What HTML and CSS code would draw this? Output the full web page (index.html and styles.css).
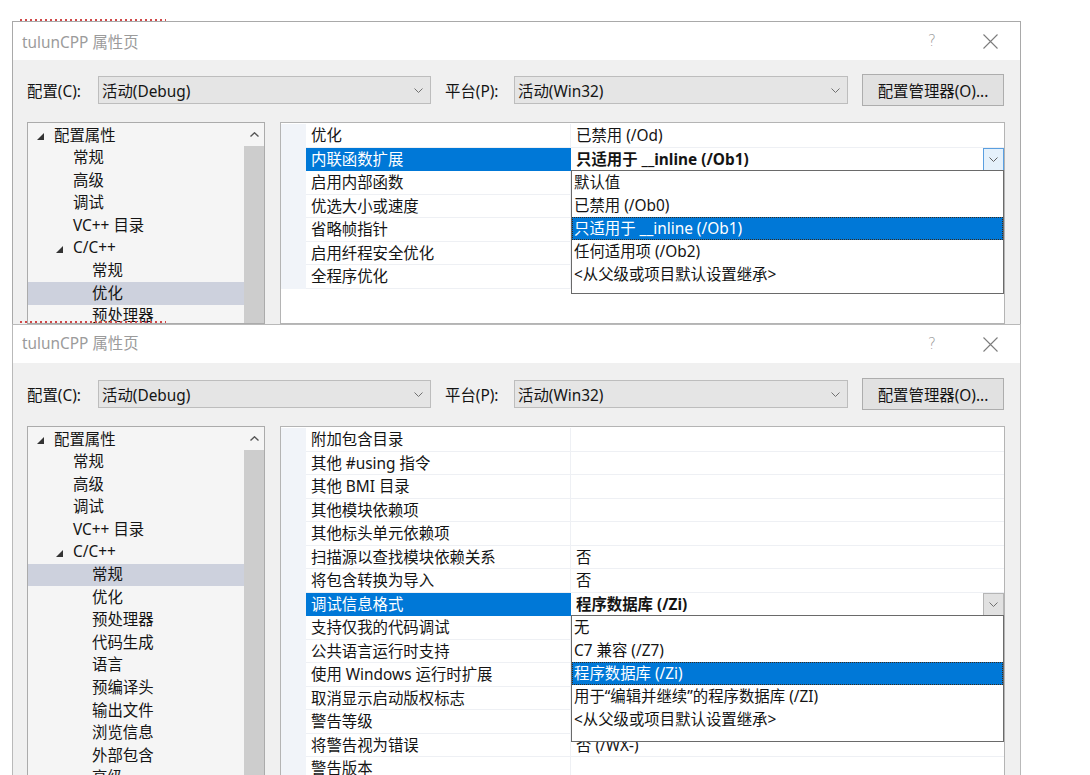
FILE: index.html
```html
<!DOCTYPE html>
<html lang="zh-CN">
<head>
<meta charset="utf-8">
<title>tulunCPP 属性页</title>
<link rel="stylesheet" href="styles.css">
</head>
<body>
<div class="page">
  <div class="squiggle"></div>

  <section class="dialog dialog-top">
    <header class="titlebar">
      <span class="title">tulunCPP 属性页</span>
      <div class="caption">
        <span class="cap help">?</span>
        <span class="cap close"><svg width="15" height="15" viewBox="0 0 15 15"><path d="M0.5 0.5L14.5 14.5M14.5 0.5L0.5 14.5" stroke="#7c7c7c" stroke-width="1.1" fill="none"/></svg></span>
      </div>
    </header>
    <div class="toolbar">
      <span class="lbl lbl-config">配置(C):</span>
      <div class="combo combo-config"><span>活动(Debug)</span><svg class="chev" width="9" height="5" viewBox="0 0 9 5"><polyline points="0.5,0.5 4.5,4.5 8.5,0.5" stroke="#707070" fill="none"/></svg></div>
      <span class="lbl lbl-platform">平台(P):</span>
      <div class="combo combo-platform"><span>活动(Win32)</span><svg class="chev" width="9" height="5" viewBox="0 0 9 5"><polyline points="0.5,0.5 4.5,4.5 8.5,0.5" stroke="#707070" fill="none"/></svg></div>
      <button class="btn">配置管理器(O)...</button>
    </div>
    <div class="main">
      <div class="tree">
        <ul class="tree-list">
          <li class="node l0"><span class="tog"><svg width="7" height="7" viewBox="0 0 7 7"><polygon points="7,0 7,7 0,7" fill="#333"/></svg></span>配置属性</li>
          <li class="node l1"><span class="tog"></span>常规</li>
          <li class="node l1"><span class="tog"></span>高级</li>
          <li class="node l1"><span class="tog"></span>调试</li>
          <li class="node l1"><span class="tog"></span>VC++ 目录</li>
          <li class="node l1"><span class="tog"><svg width="7" height="7" viewBox="0 0 7 7"><polygon points="7,0 7,7 0,7" fill="#333"/></svg></span>C/C++</li>
          <li class="node l2"><span class="tog"></span>常规</li>
          <li class="node l2 sel"><span class="tog"></span>优化</li>
          <li class="node l2"><span class="tog"></span>预处理器</li>
        </ul>
        <div class="vscroll">
          <div class="arrow"><svg width="9" height="5" viewBox="0 0 9 5"><polyline points="0.5,4.5 4.5,0.8 8.5,4.5" stroke="#555" stroke-width="1.4" fill="none"/></svg></div>
          <div class="thumb"></div>
        </div>
      </div>
      <div class="grid">
        <div class="row"><div class="gut"></div><div class="name">优化</div><div class="val">已禁用 (/Od)</div></div>
        <div class="row sel">
          <div class="gut"></div><div class="name">内联函数扩展</div>
          <div class="val">
            <b>只适用于 __inline (/Ob1)</b>
            <span class="ddbtn ddbtn-hot"><svg width="9" height="5" viewBox="0 0 9 5"><polyline points="0.5,0.5 4.5,4.5 8.5,0.5" stroke="#606060" fill="none"/></svg></span>
            <ul class="dropdown">
              <li>默认值</li>
              <li>已禁用 (/Ob0)</li>
              <li class="on">只适用于 __inline (/Ob1)</li>
              <li>任何适用项 (/Ob2)</li>
              <li>&lt;从父级或项目默认设置继承&gt;</li>
            </ul>
          </div>
        </div>
        <div class="row"><div class="gut"></div><div class="name">启用内部函数</div><div class="val"></div></div>
        <div class="row"><div class="gut"></div><div class="name">优选大小或速度</div><div class="val"></div></div>
        <div class="row"><div class="gut"></div><div class="name">省略帧指针</div><div class="val"></div></div>
        <div class="row"><div class="gut"></div><div class="name">启用纤程安全优化</div><div class="val"></div></div>
        <div class="row"><div class="gut"></div><div class="name">全程序优化</div><div class="val"></div></div>
      </div>
    </div>
  </section>

  <div class="second">
    <div class="squiggle-over"></div>
    <section class="dialog dialog-bottom">
      <header class="titlebar">
        <span class="title">tulunCPP 属性页</span>
        <div class="caption">
          <span class="cap help">?</span>
          <span class="cap close"><svg width="15" height="15" viewBox="0 0 15 15"><path d="M0.5 0.5L14.5 14.5M14.5 0.5L0.5 14.5" stroke="#7c7c7c" stroke-width="1.1" fill="none"/></svg></span>
        </div>
      </header>
      <div class="toolbar">
        <span class="lbl lbl-config">配置(C):</span>
        <div class="combo combo-config"><span>活动(Debug)</span><svg class="chev" width="9" height="5" viewBox="0 0 9 5"><polyline points="0.5,0.5 4.5,4.5 8.5,0.5" stroke="#707070" fill="none"/></svg></div>
        <span class="lbl lbl-platform">平台(P):</span>
        <div class="combo combo-platform"><span>活动(Win32)</span><svg class="chev" width="9" height="5" viewBox="0 0 9 5"><polyline points="0.5,0.5 4.5,4.5 8.5,0.5" stroke="#707070" fill="none"/></svg></div>
        <button class="btn">配置管理器(O)...</button>
      </div>
      <div class="main">
        <div class="tree">
          <ul class="tree-list">
            <li class="node l0"><span class="tog"><svg width="7" height="7" viewBox="0 0 7 7"><polygon points="7,0 7,7 0,7" fill="#333"/></svg></span>配置属性</li>
            <li class="node l1"><span class="tog"></span>常规</li>
            <li class="node l1"><span class="tog"></span>高级</li>
            <li class="node l1"><span class="tog"></span>调试</li>
            <li class="node l1"><span class="tog"></span>VC++ 目录</li>
            <li class="node l1"><span class="tog"><svg width="7" height="7" viewBox="0 0 7 7"><polygon points="7,0 7,7 0,7" fill="#333"/></svg></span>C/C++</li>
            <li class="node l2 sel"><span class="tog"></span>常规</li>
            <li class="node l2"><span class="tog"></span>优化</li>
            <li class="node l2"><span class="tog"></span>预处理器</li>
            <li class="node l2"><span class="tog"></span>代码生成</li>
            <li class="node l2"><span class="tog"></span>语言</li>
            <li class="node l2"><span class="tog"></span>预编译头</li>
            <li class="node l2"><span class="tog"></span>输出文件</li>
            <li class="node l2"><span class="tog"></span>浏览信息</li>
            <li class="node l2"><span class="tog"></span>外部包含</li>
            <li class="node l2"><span class="tog"></span>高级</li>
          </ul>
          <div class="vscroll">
            <div class="arrow"><svg width="9" height="5" viewBox="0 0 9 5"><polyline points="0.5,4.5 4.5,0.8 8.5,4.5" stroke="#555" stroke-width="1.4" fill="none"/></svg></div>
            <div class="thumb"></div>
          </div>
        </div>
        <div class="grid">
          <div class="row"><div class="gut"></div><div class="name">附加包含目录</div><div class="val"></div></div>
          <div class="row"><div class="gut"></div><div class="name">其他 #using 指令</div><div class="val"></div></div>
          <div class="row"><div class="gut"></div><div class="name">其他 BMI 目录</div><div class="val"></div></div>
          <div class="row"><div class="gut"></div><div class="name">其他模块依赖项</div><div class="val"></div></div>
          <div class="row"><div class="gut"></div><div class="name">其他标头单元依赖项</div><div class="val"></div></div>
          <div class="row"><div class="gut"></div><div class="name">扫描源以查找模块依赖关系</div><div class="val">否</div></div>
          <div class="row"><div class="gut"></div><div class="name">将包含转换为导入</div><div class="val">否</div></div>
          <div class="row sel">
            <div class="gut"></div><div class="name">调试信息格式</div>
            <div class="val">
              <b>程序数据库 (/Zi)</b>
              <span class="ddbtn"><svg width="9" height="5" viewBox="0 0 9 5"><polyline points="0.5,0.5 4.5,4.5 8.5,0.5" stroke="#707070" fill="none"/></svg></span>
              <ul class="dropdown dropdown-tall">
                <li>无</li>
                <li>C7 兼容 (/Z7)</li>
                <li class="on">程序数据库 (/Zi)</li>
                <li>用于“编辑并继续”的程序数据库 (/ZI)</li>
                <li>&lt;从父级或项目默认设置继承&gt;</li>
              </ul>
            </div>
          </div>
          <div class="row"><div class="gut"></div><div class="name">支持仅我的代码调试</div><div class="val"></div></div>
          <div class="row"><div class="gut"></div><div class="name">公共语言运行时支持</div><div class="val"></div></div>
          <div class="row"><div class="gut"></div><div class="name">使用 Windows 运行时扩展</div><div class="val"></div></div>
          <div class="row"><div class="gut"></div><div class="name">取消显示启动版权标志</div><div class="val"></div></div>
          <div class="row"><div class="gut"></div><div class="name">警告等级</div><div class="val"></div></div>
          <div class="row"><div class="gut"></div><div class="name">将警告视为错误</div><div class="val">否 (/WX-)</div></div>
          <div class="row"><div class="gut"></div><div class="name">警告版本</div><div class="val"></div></div>
        </div>
      </div>
    </section>
  </div>
</div>
</body>
</html>
```

FILE: styles.css
```css
html, body {
  margin: 0;
  padding: 0;
  overflow: hidden;
  background: #ffffff;
}

body {
  width: 1090px;
  height: 775px;
  font-family: "Noto Sans", "Noto Sans CJK SC", sans-serif;
  font-size: 15.4px;
  color: #141414;
}

ul {
  list-style: none;
  margin: 0;
  padding: 0;
}

.page {
  padding-top: 19px;
}

.squiggle {
  margin-left: 20px;
  width: 146px;
  height: 2px;
  background: repeating-linear-gradient(90deg, #d04848 0 2px, transparent 2px 5px);
}

.second {
  position: relative;
}

.squiggle-over {
  position: absolute;
  top: -3px;
  left: 20px;
  width: 146px;
  height: 2px;
  z-index: 3;
  background: repeating-linear-gradient(90deg, #d04848 0 2px, transparent 2px 5px);
}

.dialog {
  margin-left: 12px;
  width: 1009px;
  box-sizing: border-box;
  border: 1px solid #a9a9a9;
  background: #f0f0f0;
  overflow: hidden;
  display: flex;
  flex-direction: column;
}

.dialog-top {
  height: 303px;
  border-bottom: none;
}

.dialog-bottom {
  height: 460px;
  border-color: #b9b9b9;
  border-bottom: none;
}

/* title bar */
.titlebar {
  flex: none;
  height: 38px;
  background: #ffffff;
  display: flex;
  align-items: center;
  padding-left: 9px;
  padding-right: 1px;
}

.dialog-bottom .titlebar {
  height: 37px;
  padding-bottom: 1px;
  align-items: flex-start;
  padding-top: 0;
}

.dialog-bottom .title,
.dialog-bottom .caption {
  margin-top: 6px;
}

.dialog-bottom .caption {
  height: 26px;
}

.title {
  color: #9b9b9b;
}

.caption {
  margin-left: auto;
  display: flex;
  height: 100%;
}

.cap {
  width: 58px;
  display: flex;
  align-items: center;
  justify-content: center;
}

.help {
  color: #9a9a9a;
  font-size: 15px;
  font-family: "DejaVu Sans", sans-serif;
  font-weight: 200;
}

/* toolbar */
.toolbar {
  flex: none;
  display: flex;
  align-items: center;
  height: 32px;
  margin-top: 14px;
  padding-left: 14px;
}

.dialog-bottom .toolbar {
  margin-top: 15px;
}

.lbl {
  box-sizing: border-box;
  white-space: nowrap;
}

.lbl-config {
  width: 71px;
}

.lbl-platform {
  width: 83px;
  padding-left: 14px;
}

.combo {
  box-sizing: border-box;
  height: 28px;
  display: flex;
  align-items: center;
  justify-content: space-between;
  padding: 0 7px 0 3px;
  background: #e5e5e5;
  border: 1px solid #bdbdbd;
}

.combo-config {
  width: 333px;
}

.combo-platform {
  width: 334px;
}

.btn {
  box-sizing: border-box;
  margin-left: 14px;
  width: 142px;
  height: 32px;
  padding: 0;
  background: #e1e1e1;
  border: 1px solid #adadad;
  font: inherit;
  color: #141414;
}

/* main area */
.main {
  flex: 1;
  min-height: 0;
  display: flex;
  margin-top: 16px;
  padding-left: 14px;
}

.tree {
  box-sizing: border-box;
  width: 238px;
  border: 1px solid #ababab;
  background: #f5f5f5;
  display: flex;
}

.tree-list {
  flex: 1;
  padding-top: 1px;
}

.node {
  box-sizing: border-box;
  height: 22.6px;
  line-height: 22.6px;
  padding-top: 1px;
  display: flex;
  align-items: center;
  white-space: nowrap;
}

.node.sel {
  background: #cdd1dd;
}

.tog {
  width: 17px;
  flex: none;
  display: flex;
  align-items: center;
  transform: translateY(1px);
}

.l0 { padding-left: 9px; }
.l1 { padding-left: 28px; }
.l2 { padding-left: 47px; }

.vscroll {
  width: 20px;
  flex: none;
  display: flex;
  flex-direction: column;
}

.arrow {
  height: 23px;
  flex: none;
  display: flex;
  align-items: center;
  justify-content: center;
}

.thumb {
  flex: 1;
  background: #cdcdcd;
}

/* property grid */
.grid {
  box-sizing: border-box;
  margin-left: 15px;
  width: 725px;
  border: 1px solid #b4b4b4;
  background: #ffffff;
  padding-top: 1px;
}

.row {
  display: flex;
  height: 23.5px;
  line-height: 22.5px;
}

.gut {
  width: 25px;
  flex: none;
  background: #f1f4f9;
}

.name {
  box-sizing: border-box;
  width: 265px;
  flex: none;
  padding-left: 5px;
  padding-top: 1px;
  border-bottom: 1px solid #eef0f4;
  border-right: 1px solid #eef0f4;
  white-space: nowrap;
}

.val {
  box-sizing: border-box;
  position: relative;
  flex: 1;
  display: flex;
  align-items: center;
  padding-left: 5px;
  padding-top: 2px;
  border-bottom: 1px solid #eef0f4;
  white-space: nowrap;
}

.row.sel .name {
  background: #0078d7;
  color: #ffffff;
  border-color: #0078d7;
}

.val b {
  font-weight: 700;
}

.ddbtn {
  box-sizing: border-box;
  margin-left: auto;
  width: 21px;
  height: 23px;
  align-self: flex-start;
  margin-top: -2px;
  display: flex;
  align-items: center;
  justify-content: center;
  background: #e1e1e1;
  border: 1px solid #b5b5b5;
}

.ddbtn-hot {
  background: #e5f1fb;
  border-color: #5a9fe0;
}

.dropdown {
  position: absolute;
  z-index: 5;
  top: 100%;
  left: 0;
  right: 0;
  box-sizing: border-box;
  height: 124px;
  background: #ffffff;
  border: 1px solid #6a6a6a;
}

.dropdown-tall {
  height: 127px;
}

.dropdown li {
  box-sizing: border-box;
  height: 23px;
  line-height: 22px;
  padding-top: 1px;
  padding-left: 2px;
  white-space: nowrap;
}

.dropdown li.on {
  background: #0078d7;
  color: #ffffff;
  outline: 1px dotted #3a2a1a;
  outline-offset: -1px;
}
```
